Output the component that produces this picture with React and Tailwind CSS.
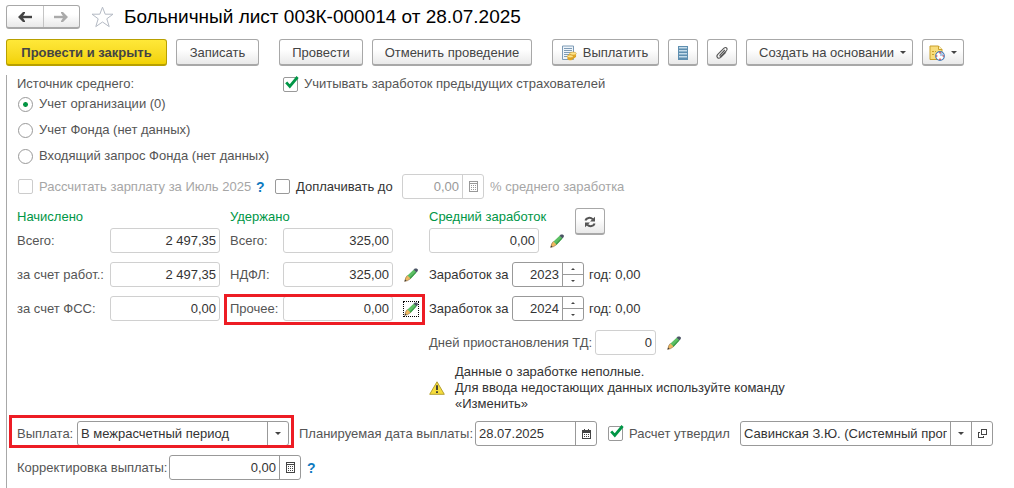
import { useId } from "react";
import clsx from "clsx";

const toolButton =
  "flex h-[27px] items-center justify-center rounded-[3px] border border-[#a8a8a8] border-b-2 bg-linear-to-b from-white from-40% to-[#e9e9e9] pt-px whitespace-nowrap text-[#444444]";

function Pencil({ focused }) {
  return (
    <button
      type="button"
      aria-label="Изменить"
      className={clsx(
        "flex size-4 shrink-0 items-center justify-center",
        focused && "outline-1 -outline-offset-1 outline-dotted outline-black",
      )}
    >
      <svg viewBox="0 0 14 14" className="size-3.5">
        <path d="M9.4 2 12.2 4.6 13.8 3.1V1.2L12.6.4 10.8.5Z" fill="#4a5364" />
        <path d="M3.2 7.8 9.6 1.8 12.4 4.6 6.4 11Z" fill="#5cc064" />
        <path d="M5.4 10 11.6 3.8 12.4 4.6 6.4 11Z" fill="#3d9a4a" />
        <path d="M3.4 7.4 6.5 10.6 3.6 12.6 1 13.2.9 12.6 1.8 9.6Z" fill="#efb860" />
        <path d="M3.4 7.4 1.8 9.6.7 13.4 3.6 12.6 6.5 10.7" fill="none" stroke="#8a6435" strokeWidth="0.6" />
        <path d="M.5 13.5 1.2 11.4 2.6 12.8Z" fill="#3b3b3b" />
      </svg>
    </button>
  );
}

function Caret({ className = "h-[3px] w-1.5" }) {
  return (
    <svg viewBox="0 0 6 3" className={className}>
      <path d="M0 0H6L3 3Z" fill="#444" />
    </svg>
  );
}

function CalcIcon() {
  return (
    <svg viewBox="0 0 9 11" className="h-[11px] w-[9px]" shapeRendering="crispEdges">
      <path d="M.5.5H8.5V10.5H.5ZM0 2.5H9" fill="none" stroke="currentColor" />
      <path d="M2 4.5H7M2 6.5H7M2 8.5H7" stroke="currentColor" strokeDasharray="1 1" />
    </svg>
  );
}

function CalendarIcon() {
  return (
    <svg viewBox="0 0 9 10" className="h-2.5 w-[9px]" shapeRendering="crispEdges">
      <path d="M.5 1.5H8.5V9.5H.5Z" fill="none" stroke="#444" />
      <path d="M0 1H9V4H0ZM2 0H3V2H2ZM6 0H7V2H6Z" fill="#444" />
      <path d="M2 5.5H7M2 7.5H7" stroke="#444" strokeDasharray="1 1" />
    </svg>
  );
}

function OpenIcon() {
  return (
    <svg viewBox="0 0 9 9" className="size-[9px]" shapeRendering="crispEdges">
      <path d="M3.5.5H8.5V5.5H3.5ZM2 3.5H.5V8.5H5.5V7" fill="none" stroke="#444" />
    </svg>
  );
}

function Checkbox({ label, className, ...props }) {
  return (
    <label className={clsx("flex items-center gap-1.5 whitespace-nowrap", className)}>
      <span className="relative size-[15px] shrink-0">
        <input
          type="checkbox"
          className="peer block size-[15px] appearance-none rounded-[2px] border border-[#999999] bg-white disabled:border-[#cccccc]"
          {...props}
        />
        <svg
          viewBox="0 0 16 16"
          className="pointer-events-none absolute -top-px left-px hidden size-4 peer-checked:block"
        >
          <path d="M2.2 6.4 5.8 10.4 13.6 1" fill="none" stroke="#009646" strokeWidth="2.8" />
        </svg>
      </span>
      {label}
    </label>
  );
}

function Radio({ label, ...props }) {
  return (
    <label className="flex h-[22px] items-center gap-1.5">
      <input
        type="radio"
        name="source"
        className="size-[15px] appearance-none rounded-full border border-[#999999] bg-white checked:bg-radial checked:from-[#009646] checked:from-[2px] checked:to-white checked:to-[3px]"
        {...props}
      />
      {label}
    </label>
  );
}

// Text box with an optional row of small buttons on its right edge
function Field({ id, value, active, right = true, width, children, ...props }) {
  return (
    <div
      className={clsx(
        "flex h-[25px] overflow-hidden rounded-[3px] border bg-white text-[#333333]",
        active ? "border-[#999999]" : "border-[#d0d0d0]",
        width,
      )}
    >
      <input
        id={id}
        type="text"
        defaultValue={value}
        className={clsx(
          "min-w-0 flex-1 bg-transparent px-[3px] outline-none disabled:text-[#999999]",
          right && "text-right",
        )}
        {...props}
      />
      {children}
    </div>
  );
}

function FieldButton({ label, light, children, ...props }) {
  return (
    <button
      type="button"
      aria-label={label}
      className={clsx(
        "flex w-[21px] shrink-0 items-center justify-center border-l",
        light ? "border-[#d0d0d0] text-[#999999]" : "border-[#999999] text-[#444444]",
      )}
      {...props}
    >
      {children}
    </button>
  );
}

function AmountRow({ label, value, labelWidth, pencil, focused, marked }) {
  const id = useId();
  return (
    <div className="relative flex items-center">
      <label htmlFor={id} className={clsx("shrink-0 whitespace-nowrap", labelWidth)}>
        {label}
      </label>
      <Field id={id} value={value} width="w-[110px]" />
      {pencil && (
        <div className="ml-2.5">
          <Pencil focused={focused} />
        </div>
      )}
      {marked && (
        <span className="pointer-events-none absolute -inset-x-1.5 -top-0.5 -bottom-1 border-3 border-[#ed1c24]" />
      )}
    </div>
  );
}

function YearRow({ year }) {
  const id = useId();
  return (
    <div className="flex items-center text-[#333333]">
      <label htmlFor={id} className="w-[83px] whitespace-nowrap">
        Заработок за
      </label>
      <Field id={id} value={year} active width="w-[72px]">
        <div className="flex w-[21px] flex-col divide-y divide-[#999999] border-l border-[#999999]">
          <button type="button" aria-label="Больше" className="flex flex-1 items-center justify-center">
            <Caret className="h-0.5 w-1 rotate-180" />
          </button>
          <button type="button" aria-label="Меньше" className="flex flex-1 items-center justify-center">
            <Caret className="h-0.5 w-1" />
          </button>
        </div>
      </Field>
      <span className="ml-[5px] whitespace-nowrap">год: 0,00</span>
    </div>
  );
}

function Header() {
  return (
    <header className="flex items-center px-1.5 pt-[5px]">
      <div className="flex h-6 w-[74px] divide-x divide-[#c4c4c4] rounded-[3px] border border-b-2 border-[#a8a8a8] bg-linear-to-b from-white from-40% to-[#e9e9e9]">
        <button type="button" aria-label="Назад" className="flex flex-1 items-center justify-center text-[#444444]">
          <svg viewBox="0 0 14 10" className="h-2.5 w-3.5">
            <path d="M14 5H2" fill="none" stroke="currentColor" strokeWidth="2.4" />
            <path d="M0 5 5 0H7V1L4.4 5 7 9V10H5Z" fill="currentColor" />
          </svg>
        </button>
        <button type="button" aria-label="Вперед" className="flex flex-1 items-center justify-center text-[#aaaaaa]">
          <svg viewBox="0 0 14 10" className="h-2.5 w-3.5">
            <path d="M0 5H12" fill="none" stroke="currentColor" strokeWidth="2.4" />
            <path d="M14 5 9 0H7V1L9.6 5 7 9V10H9Z" fill="currentColor" />
          </svg>
        </button>
      </div>
      <button type="button" aria-label="В избранное" className="ml-[11px]">
        <svg viewBox="0 0 23 22" className="block h-[22px] w-[23px]">
          <path
            d="M11.5 1.2 14.2 8.2H22L15.8 12.8 18.2 20.6 11.5 16 4.8 20.6 7.2 12.8 1 8.2H8.8Z"
            fill="white"
            stroke="#b4bac4"
          />
        </svg>
      </button>
      <h1 className="ml-2.5 text-[19px] leading-6 whitespace-nowrap text-black">
        Больничный лист 003К-000014 от 28.07.2025
      </h1>
    </header>
  );
}

function Toolbar() {
  return (
    <div className="mt-2.5 flex gap-[9px] px-1.5">
      <button
        type="button"
        className="flex h-[27px] w-[161px] items-center justify-center rounded-[3px] border border-b-2 border-[#b8a000] bg-linear-to-b from-[#ffe838] to-[#f2d200] pt-px font-bold whitespace-nowrap text-[#444444]"
      >
        Провести и закрыть
      </button>
      <button type="button" className={clsx(toolButton, "w-[83px]")}>
        Записать
      </button>
      <button type="button" className={clsx(toolButton, "ml-[11px] w-[84px]")}>
        Провести
      </button>
      <button type="button" className={clsx(toolButton, "w-40")}>
        Отменить проведение
      </button>
      <button type="button" className={clsx(toolButton, "ml-[11px] w-[107px] gap-1.5 pr-0.5")}>
        <svg viewBox="0 0 16 16" className="size-4">
          <path d="M1.5 1H12.5V14.5H1.5Z" fill="#eef4fa" stroke="#7d9bb5" />
          <path d="M3 3.5H11M3 5.5H11M3 7.5H11M3 9.5H8M3 11.5H7" stroke="#7d9bb5" />
          <path d="M6.5 11V14C7 15.8 11.5 15.8 12 14L15 12V8.5H9Z" fill="#e8ae2c" />
          <ellipse cx="12" cy="8.6" rx="3.3" ry="1.5" fill="#ffe58a" stroke="#c48c1c" strokeWidth="0.5" />
          <ellipse cx="9.2" cy="11.4" rx="3" ry="1.4" fill="#ffe58a" stroke="#c48c1c" strokeWidth="0.5" />
          <path d="M6.3 13C7 14.4 11 14.4 12.1 13L15.2 11" fill="none" stroke="#c48c1c" strokeWidth="0.5" />
        </svg>
        Выплатить
      </button>
      <button type="button" aria-label="Реестр" className={clsx(toolButton, "w-[30px]")}>
        <svg viewBox="0 0 10 14" className="h-3.5 w-2.5" shapeRendering="crispEdges">
          <path d="M0 0H10V14H0Z" fill="#5f8fb0" />
          <path d="M1 1.5H9M1 4.5H9M1 7.5H9M1 10.5H9" stroke="#c6dcea" />
          <path d="M1 2.5H9M1 5.5H9M1 8.5H9M1 11.5H9" stroke="#90b4cc" />
        </svg>
      </button>
      <button type="button" aria-label="Файлы" className={clsx(toolButton, "w-[30px]")}>
        <svg viewBox="0 0 14 14" className="size-3.5">
          <path
            d="M9.8 4 5.2 8.8C4.3 9.8 5.4 10.8 6.3 9.9L11.5 4.6C13.2 2.7 11 .4 9 2.2L2.8 8.4C.6 10.8 3.2 13.6 5.7 11.4L11 6.2"
            fill="none"
            stroke="#555"
            strokeWidth="1.1"
          />
        </svg>
      </button>
      <button type="button" className={clsx(toolButton, "w-[167px] gap-1.5 pl-1.5")}>
        Создать на основании
        <Caret />
      </button>
      <button type="button" aria-label="Напоминание" className={clsx(toolButton, "w-[42px] gap-1.5")}>
        <svg viewBox="0 0 16 16" className="size-4">
          <path d="M1 1H9.5L13 4.5V14.5H1Z" fill="#f8dd7c" stroke="#c9a02c" />
          <path d="M9.5 1V4.5H13" fill="#fff3c0" stroke="#c9a02c" />
          <path d="M3 6.5H7M3 9.5H6" stroke="#c9a02c" strokeDasharray="2 1" />
          <circle cx="11" cy="11" r="4.3" fill="white" stroke="#4a7db8" strokeWidth="1.2" />
          <path d="M11 11V7.5A3.5 3.5 0 0 1 14.5 11Z" fill="#a9c6e6" />
          <path d="M11 7V8.4M11 13.6V15M7 11H8.4M13.6 11H15" stroke="#e02020" strokeWidth="1.2" />
        </svg>
        <Caret />
      </button>
    </div>
  );
}

function Totals() {
  return (
    <section className="mt-[9px] flex items-start">
      <div>
        <h2 className="mb-[3px] pt-px leading-4 text-[#009646]">Начислено</h2>
        <div className="flex flex-col gap-[9px]">
          <AmountRow label="Всего:" value="2 497,35" labelWidth="w-[93px]" />
          <AmountRow label="за счет работ.:" value="2 497,35" labelWidth="w-[93px]" />
          <AmountRow label="за счет ФСС:" value="0,00" labelWidth="w-[93px]" />
        </div>
      </div>

      <div className="ml-2.5">
        <h2 className="mb-[3px] pt-px leading-4 text-[#009646]">Удержано</h2>
        <div className="flex flex-col gap-[9px]">
          <AmountRow label="Всего:" value="325,00" labelWidth="w-[53px]" />
          <AmountRow label="НДФЛ:" value="325,00" labelWidth="w-[53px]" pencil />
          <AmountRow label="Прочее:" value="0,00" labelWidth="w-[53px]" pencil focused marked />
        </div>
      </div>

      <div className="ml-2.5 flex flex-col gap-[9px]">
        <div className="flex items-start">
          <div>
            <label
              htmlFor="average"
              className="mb-[3px] block pt-px leading-4 whitespace-nowrap text-[#009646]"
            >
              Средний заработок
            </label>
            <div className="flex items-center gap-2.5">
              <Field id="average" value="0,00" width="w-[110px]" />
              <Pencil />
            </div>
          </div>
          <button type="button" aria-label="Обновить" className={clsx(toolButton, "ml-2.5 w-[30px]")}>
            <svg viewBox="0 0 12 12" className="size-3">
              <path d="M1.4 4.6C2.2 1.6 6.4 1 8.8 3.2M10.6 7.4C9.8 10.4 5.6 11 3.2 8.8" fill="none" stroke="#555" strokeWidth="2" />
              <path d="M11 .8V5.4H6ZM1 11.2V6.6H6Z" fill="#555" />
            </svg>
          </button>
        </div>
        <YearRow year="2023" />
        <YearRow year="2024" />
        <div className="flex items-center">
          <label htmlFor="days" className="w-[166px] whitespace-nowrap">
            Дней приостановления ТД:
          </label>
          <Field id="days" value="0" width="w-[61px]" />
          <div className="ml-2.5">
            <Pencil />
          </div>
        </div>
        <div className="flex items-center gap-2.5 text-[#333333]">
          <svg viewBox="0 0 16 14" className="h-3.5 w-4 shrink-0">
            <path d="M8 .8 15.3 13.3H.7Z" fill="#f5dc3c" stroke="#b5a030" strokeLinejoin="round" />
            <path d="M8 4.2V9M8 10.2V12" stroke="#333" strokeWidth="1.8" />
          </svg>
          <p className="leading-4">
            Данные о заработке неполные.
            <br />
            Для ввода недостающих данных используйте команду
            <br />
            «Изменить»
          </p>
        </div>
      </div>
    </section>
  );
}

function Payment() {
  return (
    <section className="mt-[9px] flex flex-col gap-[9px]">
      <div className="flex items-center pr-[21px]">
        <div className="relative flex shrink-0 items-center">
          <label htmlFor="payment" className="w-[60px]">
            Выплата:
          </label>
          <div className="relative h-[25px] w-[212px] rounded-[3px] border border-[#999999]">
            <select id="payment" className="size-full appearance-none px-[3px] text-[#333333] outline-none">
              <option>В межрасчетный период</option>
            </select>
            <span className="pointer-events-none absolute inset-y-0 right-0 flex w-[21px] items-center justify-center border-l border-[#999999]">
              <Caret />
            </span>
          </div>
          <span className="pointer-events-none absolute -top-1.5 -right-[5px] -bottom-0.5 -left-2 border-3 border-[#ed1c24]" />
        </div>
        <label htmlFor="date" className="ml-2.5 w-44 shrink-0 whitespace-nowrap">
          Планируемая дата выплаты:
        </label>
        <Field id="date" value="28.07.2025" active right={false} width="w-[122px] shrink-0">
          <FieldButton label="Календарь">
            <CalendarIcon />
          </FieldButton>
        </Field>
        <Checkbox label="Расчет утвердил" defaultChecked className="ml-[11px] w-[132px] shrink-0" />
        <Field
          value="Савинская З.Ю. (Системный программист)"
          aria-label="Расчет утвердил"
          active
          right={false}
          width="min-w-40 flex-1"
        >
          <FieldButton label="Выбрать">
            <Caret />
          </FieldButton>
          <FieldButton label="Открыть">
            <OpenIcon />
          </FieldButton>
        </Field>
      </div>
      <div className="flex items-center">
        <label htmlFor="correction" className="w-[152px] whitespace-nowrap">
          Корректировка выплаты:
        </label>
        <Field id="correction" value="0,00" active width="w-[132px]">
          <FieldButton label="Калькулятор">
            <CalcIcon />
          </FieldButton>
        </Field>
        <a href="#help" className="ml-1.5 text-sm font-bold text-[#0f7ac0]">
          ?
        </a>
      </div>
    </section>
  );
}

export default function App() {
  return (
    <main className="bg-white font-['Liberation_Sans',Arial,sans-serif] text-[13px] leading-4 text-[#555555]">
      <Header />
      <Toolbar />
      <form className="mt-[9px] ml-1.5 border-l border-[#a8a8a8] pt-px pb-2 pl-2.5">
        <div className="mb-px flex h-4 items-center">
          <span className="w-[266px]">Источник среднего:</span>
          <Checkbox label="Учитывать заработок предыдущих страхователей" defaultChecked />
        </div>
        <div className="flex flex-col gap-1 pl-px">
          <Radio label="Учет организации (0)" defaultChecked />
          <Radio label="Учет Фонда (нет данных)" />
          <Radio label="Входящий запрос Фонда (нет данных)" />
        </div>
        <div className="mt-[7px] flex items-center pl-px">
          <Checkbox
            label="Рассчитать зарплату за Июль 2025"
            disabled
            className="w-[238px] text-[#a6a6a6]"
          />
          <a href="#help" className="w-[19px] text-sm font-bold text-[#0f7ac0]">
            ?
          </a>
          <Checkbox label="Доплачивать до" className="w-[127px] text-[#333333]" />
          <Field value="0,00" aria-label="Процент среднего заработка" disabled width="w-[82px]">
            <FieldButton label="Калькулятор" light disabled>
              <CalcIcon />
            </FieldButton>
          </Field>
          <span className="ml-1.5 text-[#a6a6a6]">% среднего заработка</span>
        </div>
        <Totals />
        <Payment />
      </form>
    </main>
  );
}
